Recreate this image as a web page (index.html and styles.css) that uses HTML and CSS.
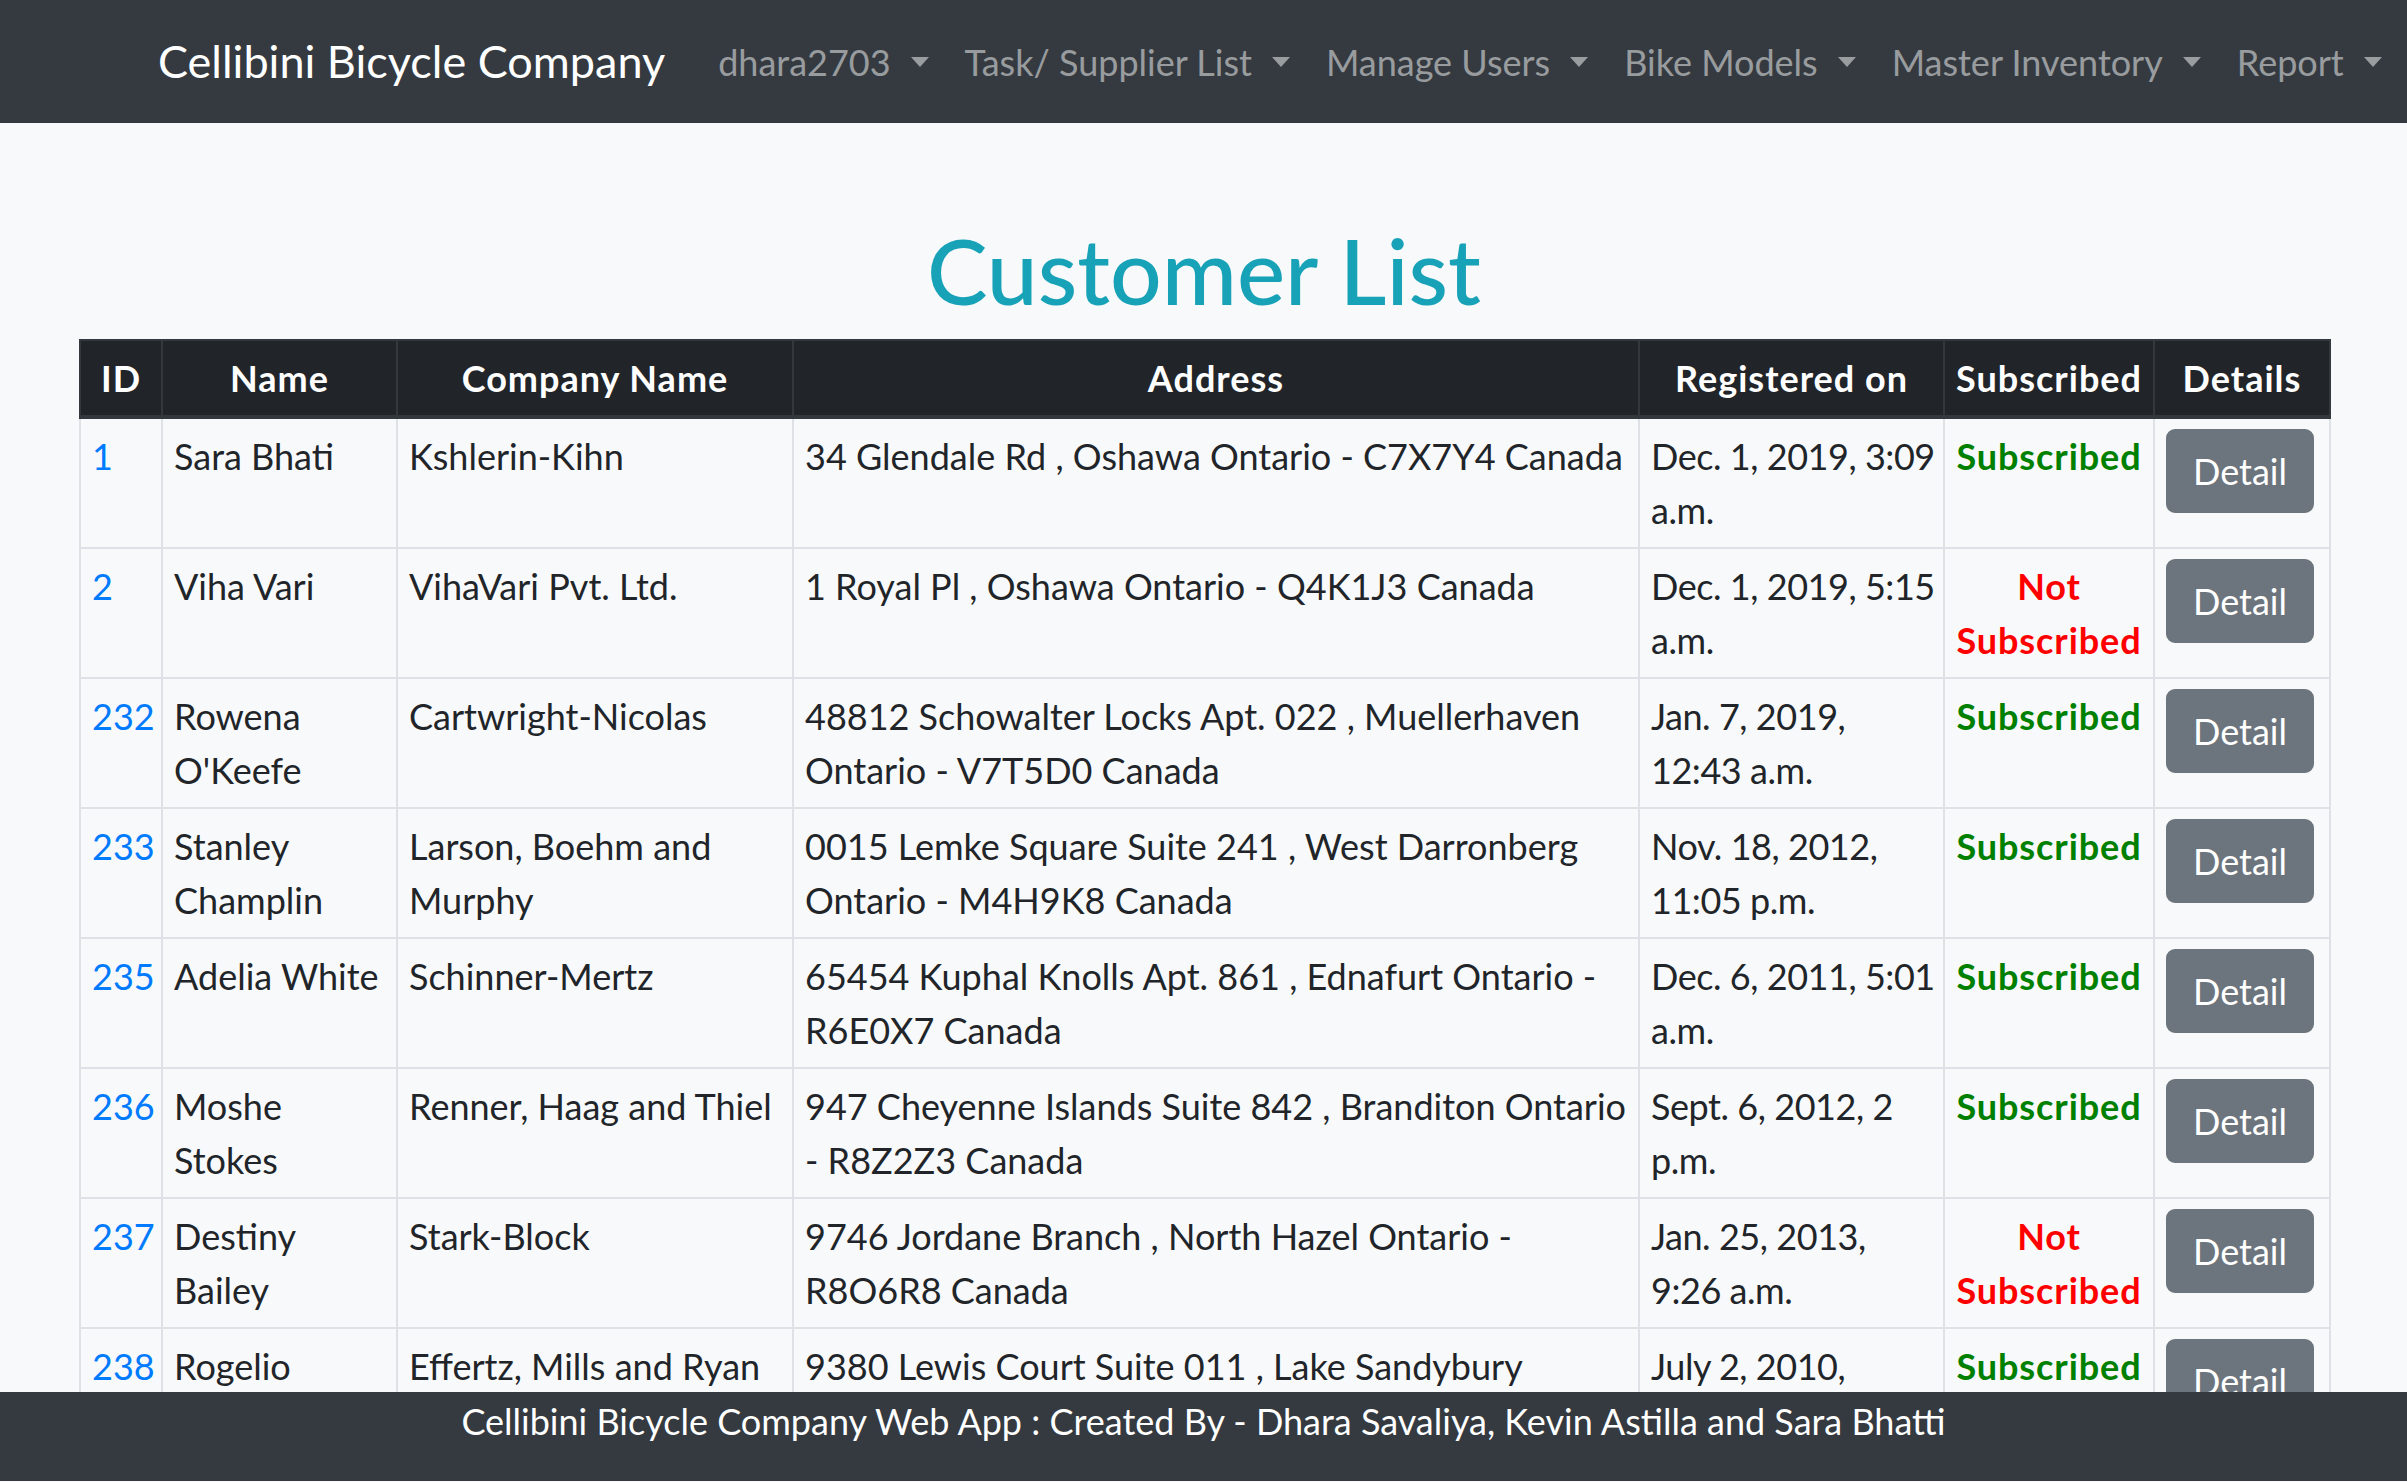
FILE: index.html
```html
<!DOCTYPE html>
<html lang="en">
<head>
<meta charset="utf-8">
<title>Customer List</title>
<link rel="stylesheet" href="styles.css">
</head>
<body>
<nav class="navbar">
  <a class="brand" href="#">Cellibini Bicycle Company</a>
  <ul class="nav">
    <li><a class="nav-link dropdown" href="#">dhara2703</a></li>
    <li><a class="nav-link dropdown" href="#">Task/ Supplier List</a></li>
    <li><a class="nav-link dropdown" href="#">Manage Users</a></li>
    <li><a class="nav-link dropdown" href="#">Bike Models</a></li>
    <li><a class="nav-link dropdown" href="#">Master Inventory</a></li>
    <li><a class="nav-link dropdown" href="#">Report</a></li>
  </ul>
</nav>

<main class="content">
  <h1 class="title">Customer List</h1>
  <table class="table">
    <colgroup>
      <col class="c-id"><col class="c-name"><col class="c-company"><col class="c-address"><col class="c-reg"><col class="c-sub"><col class="c-det">
    </colgroup>
    <thead>
      <tr><th>ID</th><th>Name</th><th>Company Name</th><th>Address</th><th>Registered on</th><th>Subscribed</th><th>Details</th></tr>
    </thead>
    <tbody>
      <tr><td><a href="#">1</a></td><td>Sara Bhati</td><td>Kshlerin-Kihn</td><td>34 Glendale Rd , Oshawa Ontario - C7X7Y4 Canada</td><td class="date">Dec. 1, 2019, 3:09 a.m.</td><td class="sub yes">Subscribed</td><td><a class="btn" href="#">Detail</a></td></tr>
      <tr><td><a href="#">2</a></td><td>Viha Vari</td><td>VihaVari Pvt. Ltd.</td><td>1 Royal Pl , Oshawa Ontario - Q4K1J3 Canada</td><td class="date">Dec. 1, 2019, 5:15 a.m.</td><td class="sub no">Not Subscribed</td><td><a class="btn" href="#">Detail</a></td></tr>
      <tr><td><a href="#">232</a></td><td>Rowena O'Keefe</td><td>Cartwright-Nicolas</td><td>48812 Schowalter Locks Apt. 022 , Muellerhaven Ontario - V7T5D0 Canada</td><td class="date">Jan. 7, 2019, 12:43 a.m.</td><td class="sub yes">Subscribed</td><td><a class="btn" href="#">Detail</a></td></tr>
      <tr><td><a href="#">233</a></td><td>Stanley Champlin</td><td>Larson, Boehm and Murphy</td><td>0015 Lemke Square Suite 241 , West Darronberg Ontario - M4H9K8 Canada</td><td class="date">Nov. 18, 2012, 11:05 p.m.</td><td class="sub yes">Subscribed</td><td><a class="btn" href="#">Detail</a></td></tr>
      <tr><td><a href="#">235</a></td><td>Adelia White</td><td>Schinner-Mertz</td><td>65454 Kuphal Knolls Apt. 861 , Ednafurt Ontario - R6E0X7 Canada</td><td class="date">Dec. 6, 2011, 5:01 a.m.</td><td class="sub yes">Subscribed</td><td><a class="btn" href="#">Detail</a></td></tr>
      <tr><td><a href="#">236</a></td><td>Moshe Stokes</td><td>Renner, Haag and Thiel</td><td>947 Cheyenne Islands Suite 842 , Branditon Ontario - R8Z2Z3 Canada</td><td class="date">Sept. 6, 2012, 2 p.m.</td><td class="sub yes">Subscribed</td><td><a class="btn" href="#">Detail</a></td></tr>
      <tr><td><a href="#">237</a></td><td>Destiny Bailey</td><td>Stark-Block</td><td>9746 Jordane Branch , North Hazel Ontario - R8O6R8 Canada</td><td class="date">Jan. 25, 2013, 9:26 a.m.</td><td class="sub no">Not Subscribed</td><td><a class="btn" href="#">Detail</a></td></tr>
      <tr><td><a href="#">238</a></td><td>Rogelio Kuhic</td><td>Effertz, Mills and Ryan</td><td>9380 Lewis Court Suite 011 , Lake Sandybury Ontario - K2P4L1 Canada</td><td class="date">July 2, 2010, 11:48 p.m.</td><td class="sub yes">Subscribed</td><td><a class="btn" href="#">Detail</a></td></tr>
    </tbody>
  </table>
</main>

<footer class="footer">Cellibini Bicycle Company Web App : Created By - Dhara Savaliya, Kevin Astilla and Sara Bhatti</footer>
</body>
</html>
```
FILE: styles.css
```css
* { box-sizing: border-box; }
html, body { margin: 0; padding: 0; }
body {
  background: #f8f9fa;
  color: #212529;
  font-family: "Lato", "Open Sans", sans-serif;
  font-size: 36px;
  line-height: 54px;
  height: 1482px;
  overflow: hidden;
}
a { text-decoration: none; }

.navbar {
  background: #343a40;
  height: 123px;
  display: flex;
  align-items: center;
  padding: 0 0 0 158px;
}
.brand {
  color: #fff;
  font-size: 45px;
  line-height: 67px;
  margin-right: 35px;
  white-space: nowrap;
}
.nav {
  display: flex;
  list-style: none;
  margin: 0;
  padding: 0;
}
.nav-link {
  display: block;
  color: rgba(255,255,255,.5);
  padding: 9px 18px;
  white-space: nowrap;
}
.dropdown::after {
  content: "";
  display: inline-block;
  margin-left: 20px;
  vertical-align: 9px;
  border-top: 10px solid;
  border-left: 9px solid transparent;
  border-right: 9px solid transparent;
}

.content { padding: 0 78px 0 79px; }
.title {
  margin: 93px 0 15px;
  text-align: center;
  color: #17a2b8;
  font-size: 91px;
  line-height: 108px;
  font-weight: 500;
}

.table {
  width: 2250px;
  border-collapse: collapse;
  table-layout: fixed;
}
.c-id { width: 82px; }
.c-name { width: 235px; }
.c-company { width: 396px; }
.c-address { width: 846px; }
.c-reg { width: 305px; }
.c-sub { width: 210px; }
.c-det { width: 176px; }

.table th, .table td {
  border: 2px solid #dee2e6;
  padding: 10px 11px;
  vertical-align: top;
  text-align: left;
}
.table thead th {
  background: #212529;
  color: #fff;
  border-color: #32383e;
  border-bottom-width: 4px;
  font-weight: 700;
  letter-spacing: 1px;
  text-align: center;
  white-space: nowrap;
  padding-left: 2px;
  padding-right: 2px;
}
.table td a { color: #007bff; }
.table td.date { letter-spacing: -0.45px; padding-right: 5px; }
.sub { font-weight: 700; letter-spacing: 0.9px; text-align: center !important; padding-left: 4px !important; padding-right: 4px !important; }
.sub.yes { color: #008000; }
.sub.no { color: #ff0000; }

.table td a.btn {
  display: inline-block;
  color: #fff;
  background: #6c757d;
  border: 2px solid #6c757d;
  border-radius: 9px;
  padding: 13px 25px;
  line-height: 54px;
}

.footer {
  position: fixed;
  left: 0;
  right: 0;
  bottom: 1px;
  height: 89px;
  background: #343a40;
  color: #fff;
  text-align: center;
  padding-top: 2px;
}
```
